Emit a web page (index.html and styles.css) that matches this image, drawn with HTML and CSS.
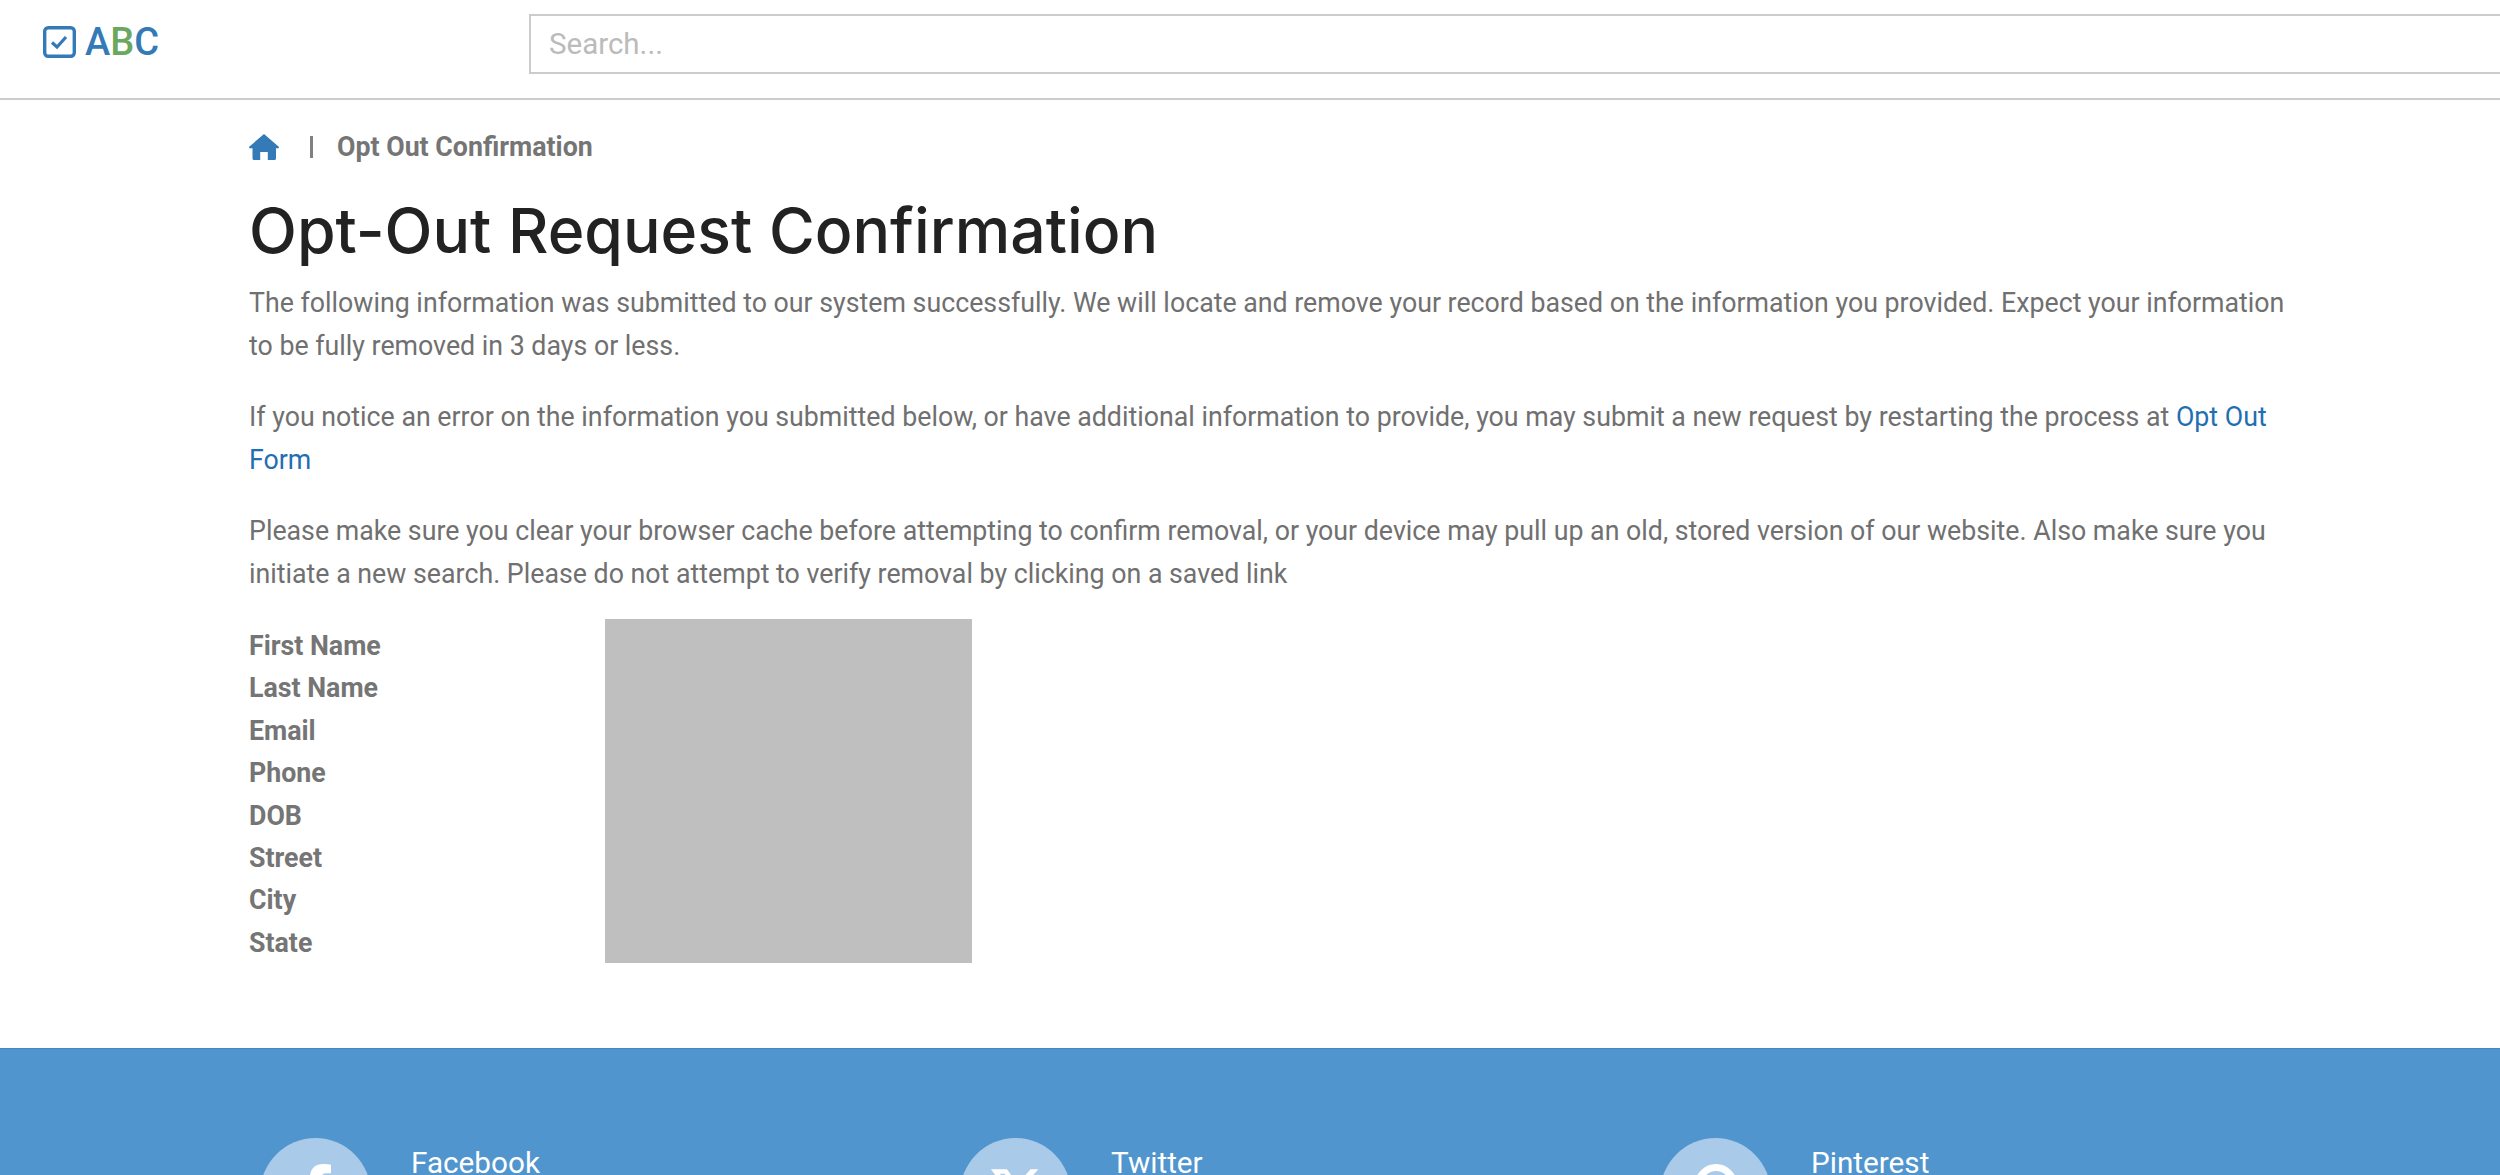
FILE: index.html
```html
<!DOCTYPE html>
<html lang="en">
<head>
  <meta charset="UTF-8" />
  <title>Opt-Out Request Confirmation</title>
  <link rel="stylesheet" href="styles.css">
</head>
<body>
  <header class="topbar">
    <a class="logo" href="#">
      <svg class="logo-icon" viewBox="0 0 33 32" fill="none">
        <rect x="1.700" y="1.700" width="29.600" height="28.600" rx="3.500" stroke="#337ab7" stroke-width="3.400" />
        <path d="M9 16.500l5 4.500 9-10" stroke="#337ab7" stroke-width="3.200" />
      </svg>
      <span class="logo-text">A<span class="logo-green">B</span>C</span>
    </a>
    <input class="search" type="text" placeholder="Search..." />
  </header>

  <main class="content">
    <div class="crumbs">
      <svg class="home-icon" viewBox="0 0 30 26">
        <path d="M15 0L29.500 12.500a1 1 0 0 1-.7 1.800H27V24.500a1.500 1.500 0 0 1-1.500 1.500H18.800V18h-7.600V26H5a1.500 1.500 0 0 1-1.500-1.500V14.300H1.200a1 1 0 0 1-.7-1.800z" fill="#337ab7" />
      </svg>
      <span class="crumb-sep"></span>
      <span class="crumb-current">Opt Out Confirmation</span>
    </div>

    <h1>Opt-Out Request Confirmation</h1>

    <p>The following information was submitted to our system successfully. We will locate and remove your record based on the information you provided. Expect your information to be fully removed in 3 days or less.</p>
    <p>If you notice an error on the information you submitted below, or have additional information to provide, you may submit a new request by restarting the process at <a href="#">Opt Out Form</a></p>
    <p>Please make sure you clear your browser cache before attempting to confirm removal, or your device may pull up an old, stored version of our website. Also make sure you initiate a new search. Please do not attempt to verify removal by clicking on a saved link</p>

    <div class="details">
      <ul class="fields">
        <li>First Name</li>
        <li>Last Name</li>
        <li>Email</li>
        <li>Phone</li>
        <li>DOB</li>
        <li>Street</li>
        <li>City</li>
        <li>State</li>
      </ul>
      <div class="redacted"></div>
    </div>
  </main>

  <footer class="footer">
    <div class="social">
      <span class="circle">
        <svg class="fb-glyph" viewBox="0 0 320 512"><path d="M279.14 288l14.22-92.66h-88.91v-60.13c0-25.35 12.42-50.06 52.24-50.06h40.42V6.26S260.43 0 225.36 0c-73.22 0-121.08 44.38-121.08 124.72v70.62H22.89V288h81.39v224h100.17V288z" /></svg>
      </span>
      <span class="social-name">Facebook</span>
    </div>
    <div class="social">
      <span class="circle">
        <svg class="x-glyph" viewBox="0 0 512 512"><path d="M389.2 48h70.6L305.6 224.2 487 464H345L233.7 318.6 106.5 464H35.8L200.7 275.5 26.8 48H172.4L272.9 180.9 389.2 48zM364.4 421.8h39.1L151.1 88h-42L364.4 421.8z" /></svg>
      </span>
      <span class="social-name">Twitter</span>
    </div>
    <div class="social">
      <span class="circle">
        <svg class="pin-glyph" viewBox="0 0 42 42"><circle cx="21" cy="21" r="17.500" /></svg>
      </span>
      <span class="social-name">Pinterest</span>
    </div>
  </footer>
</body>
</html>
```

FILE: styles.css
```css
html, body {
  height: 100%;
  overflow: hidden;
}

body {
  margin: 0;
  display: flex;
  flex-direction: column;
  font-family: Roboto, "Liberation Sans", sans-serif;
  font-size: 26.75px;
  line-height: 42.5px;
  color: #707070;
  background: #fff;
}

.topbar {
  flex: none;
  display: flex;
  align-items: flex-start;
  height: 98px;
  border-bottom: 2px solid #ccc;
}

.logo {
  display: flex;
  align-items: center;
  gap: 9px;
  width: 486px;
  margin-left: 43px;
  padding-top: 21px;
  text-decoration: none;
}

.logo-icon {
  width: 33px;
  height: 32px;
}

.logo-text {
  font-size: 38px;
  font-weight: 500;
  line-height: 42px;
  color: #337ab7;
}

.logo-green {
  color: #6aa85f;
}

.search {
  flex: 1;
  height: 60px;
  margin-top: 14px;
  margin-right: -20px;
  padding: 0 18px;
  box-sizing: border-box;
  border: 2px solid #ccc;
  font-family: inherit;
  font-size: 29.5px;
  color: #555;
}

.search::placeholder {
  color: #bbb;
}

.content {
  flex: none;
  height: 948px;
  box-sizing: border-box;
  padding: 29px 200px 0 249px;
}

.crumbs {
  display: flex;
  align-items: center;
  height: 36px;
}

.home-icon {
  width: 30px;
  height: 26px;
}

.crumb-sep {
  width: 3px;
  height: 22px;
  margin: 0 24px 0 31px;
  background: #808080;
}

.crumb-current {
  font-weight: 700;
  color: #757575;
}

h1 {
  margin: 25px 0 12px;
  font-family: Inter, "Open Sans", sans-serif;
  font-size: 62.5px;
  font-weight: 500;
  line-height: 80px;
  color: #222;
}

p {
  margin: 0 0 29px;
}

a {
  color: #1f6fb2;
  text-decoration: none;
}

.details {
  display: flex;
  margin-top: -5px;
}

.fields {
  width: 356px;
  margin: 0;
  padding: 6px 0 0;
  list-style: none;
  font-weight: 700;
  line-height: 42.4px;
  color: #757575;
}

.redacted {
  width: 367px;
  height: 344px;
  background: #bfbfbf;
}

.footer {
  flex: 1;
  display: grid;
  grid-template-columns: 700px 700px 700px;
  padding: 89px 0 0 260px;
  background: #5095ce;
  border-top: 1px solid #4a86bd;
  overflow: hidden;
}

.social {
  display: flex;
  align-items: flex-start;
  gap: 40px;
  height: 112px;
}

.circle {
  flex: none;
  display: flex;
  justify-content: center;
  width: 111px;
  height: 112px;
  border-radius: 50%;
  background: #a9cae8;
}

.circle svg {
  fill: #fff;
}

.fb-glyph {
  width: 36px;
  height: 56px;
  margin-top: 26px;
}

.x-glyph {
  width: 56px;
  height: 56px;
  margin-top: 26px;
}

.circle .pin-glyph {
  width: 42px;
  height: 42px;
  margin-top: 26px;
  fill: none;
  stroke: #fff;
  stroke-width: 7;
}

.social-name {
  font-size: 29.7px;
  line-height: 36px;
  margin-top: 7px;
  color: #fff;
}
```
